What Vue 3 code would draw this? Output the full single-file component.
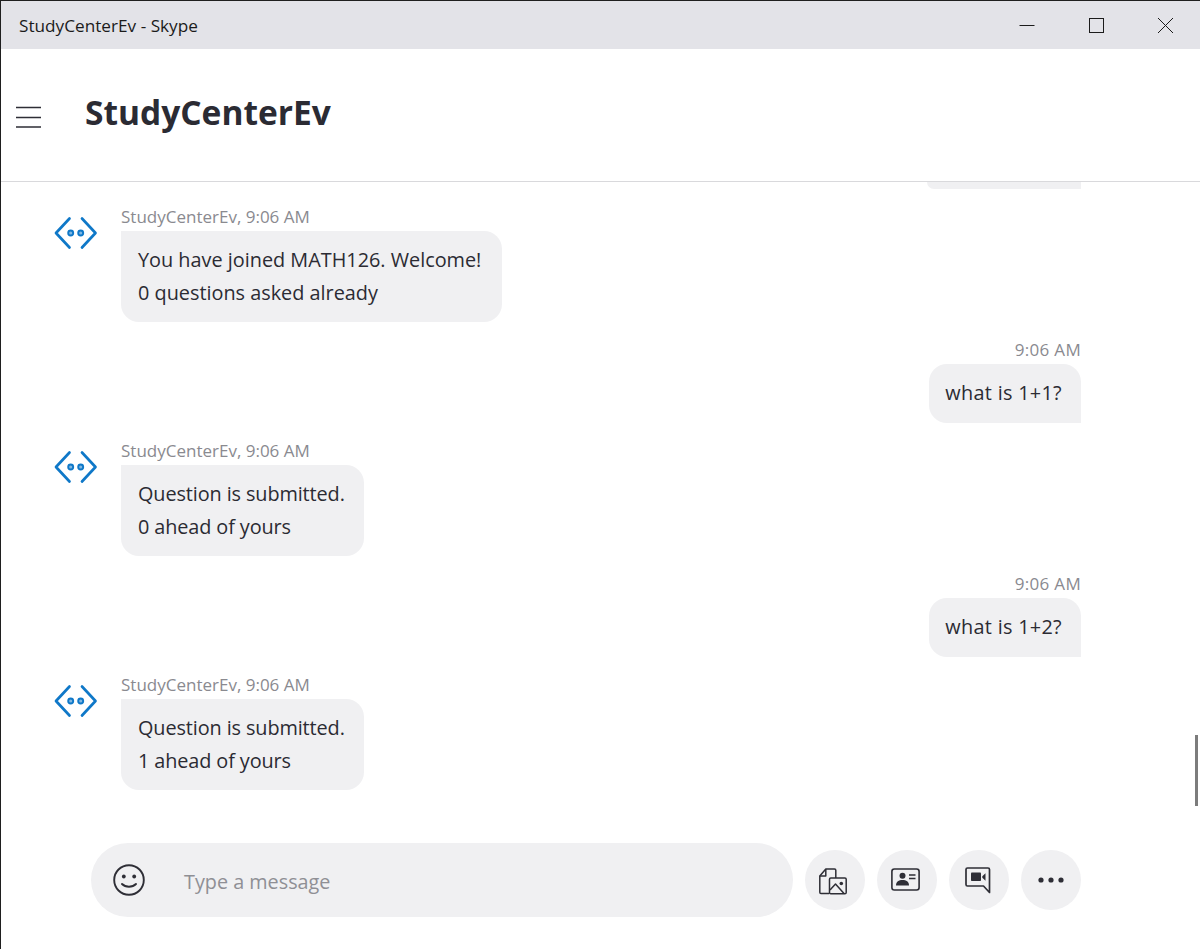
<template>
  <div class="window">
    <div class="titlebar">
      <span class="win-title">StudyCenterEv - Skype</span>
      <div class="win-buttons">
        <svg width="16" height="16" viewBox="0 0 16 16"><path d="M0.5 8.5h15" stroke="#1b1b1b" fill="none" /></svg>
        <svg width="16" height="16" viewBox="0 0 16 16"><rect x="1.5" y="1.5" width="14" height="14" stroke="#1b1b1b" fill="none" /></svg>
        <svg width="16" height="16" viewBox="0 0 16 16"><path d="M1 1l15 15M16 1L1 16" stroke="#1b1b1b" fill="none" /></svg>
      </div>
    </div>

    <header class="header">
      <svg class="burger" width="26" height="22" viewBox="0 0 26 22">
        <path d="M0 1.500h25M0 11.500h25M0 21h25" stroke="#2e2e36" stroke-width="1.600" fill="none" />
      </svg>
      <h1 class="chat-name">StudyCenterEv</h1>
    </header>

    <main class="messages">
      <div class="stub"></div>
      <template v-for="(m, i) in messages" :key="i">
        <div v-if="m.mine" class="row mine">
          <div class="meta">{{ m.time }}</div>
          <div class="bubble single">{{ m.lines[0] }}</div>
        </div>
        <div v-else class="row bot">
          <svg class="avatar" width="44" height="34" viewBox="0 0 44 34">
            <path d="M15.500 2.500L2 17l13.500 14.500M28 2.500L41.500 17 28 31.500" stroke="#0f78c8" stroke-width="2.700" stroke-linecap="round" stroke-linejoin="round" fill="none" />
            <circle cx="16.700" cy="17" r="2.500" fill="#7fb6e0" stroke="#0f78c8" stroke-width="1.900" />
            <circle cx="26.700" cy="17" r="2.500" fill="#7fb6e0" stroke="#0f78c8" stroke-width="1.900" />
          </svg>
          <div class="body">
            <div class="meta">StudyCenterEv, {{ m.time }}</div>
            <div class="bubble" :class="m.kind">
              <div v-for="line in m.lines" :key="line">{{ line }}</div>
            </div>
          </div>
        </div>
      </template>
    </main>

    <div class="scroll-thumb"></div>

    <footer class="composer">
      <div class="input">
        <svg class="smile" width="32" height="32" viewBox="0 0 32 32">
          <circle cx="16" cy="16" r="14.800" fill="none" stroke="#2e2e36" stroke-width="1.900" />
          <circle cx="10.800" cy="12.500" r="1.900" fill="#2e2e36" />
          <circle cx="21.200" cy="12.500" r="1.900" fill="#2e2e36" />
          <path d="M9 20c3.500 3.600 10.500 3.600 14 0" fill="none" stroke="#2e2e36" stroke-width="1.900" stroke-linecap="round" />
        </svg>
        <span class="placeholder">Type a message</span>
      </div>
      <button class="round">
        <svg class="icon-media" width="28" height="27" viewBox="0 0 28 27" fill="none" stroke="#2e2e36" stroke-width="1.500" stroke-linejoin="round">
          <path d="M10 25.500H2A1.300 1.300 0 0 1 .8 24.200V8l6-7h8.700a1.300 1.300 0 0 1 1.300 1.300V10" />
          <path d="M6.800 1v7H.8" />
          <rect x="10.500" y="10" width="16.700" height="15.700" rx="1.300" fill="#f0f0f2" />
          <path d="M11 22l5.500-6 8.500 9.500" />
          <circle cx="22.300" cy="15.500" r="1.800" fill="#2e2e36" stroke="none" />
        </svg>
      </button>
      <button class="round">
        <svg class="icon-card" width="29" height="23" viewBox="0 0 29 23" fill="none">
          <rect x=".9" y="1" width="27.200" height="21" rx="2.500" stroke="#2e2e36" stroke-width="1.600" />
          <circle cx="11.500" cy="7.800" r="3" fill="#2e2e36" />
          <path d="M5 17.500c0-4 2.800-5.500 6.500-5.500s6.500 1.500 6.500 5.500z" fill="#2e2e36" />
          <path d="M18 7h6.500M18 10.500h6.500" stroke="#2e2e36" stroke-width="1.500" />
        </svg>
      </button>
      <button class="round">
        <svg class="icon-video" width="26" height="27" viewBox="0 0 26 27" fill="none">
          <path d="M2.500 1h20.500A1.500 1.500 0 0 1 24.500 2.500V25.500l-6-6.500H2.500A1.500 1.500 0 0 1 1 17.500V2.500A1.500 1.500 0 0 1 2.500 1z" stroke="#2e2e36" stroke-width="1.700" stroke-linejoin="round" />
          <rect x="6" y="5.500" width="10" height="8.500" rx=".8" fill="#2e2e36" />
          <path d="M17.300 9.300l3.200-3v7.400l-3.200-3z" fill="#2e2e36" />
        </svg>
      </button>
      <button class="round">
        <svg width="26" height="6" viewBox="0 0 26 6" fill="#2e2e36">
          <circle cx="3" cy="3" r="2.600" />
          <circle cx="13" cy="3" r="2.600" />
          <circle cx="23" cy="3" r="2.600" />
        </svg>
      </button>
    </footer>
  </div>
</template>

<script setup>
const messages = [
  { kind: 'welcome', time: '9:06 AM', lines: ['You have joined MATH126. Welcome!', '0 questions asked already'] },
  { mine: true, time: '9:06 AM', lines: ['what is 1+1?'] },
  { kind: 'queued', time: '9:06 AM', lines: ['Question is submitted.', '0 ahead of yours'] },
  { mine: true, time: '9:06 AM', lines: ['what is 1+2?'] },
  { kind: 'queued', time: '9:06 AM', lines: ['Question is submitted.', '1 ahead of yours'] }
]
</script>

<style>
html, body {
  margin: 0;
  background: #fff;
}
</style>

<style scoped>
.window {
  position: relative;
  box-sizing: border-box;
  height: 949px;
  border-top: 1px solid #1f1f1f;
  border-left: 1px solid #1f1f1f;
  display: flex;
  flex-direction: column;
  overflow: hidden;
  background: #fff;
  color: #2b2b33;
  font-family: "Open Sans", "Noto Sans", sans-serif;
}
.titlebar {
  height: 48px;
  flex: none;
  background: #e3e3e8;
  display: flex;
  align-items: center;
  justify-content: space-between;
  padding-left: 18px;
}
.win-title {
  font-size: 17.2px;
  color: #1b1b1b;
}
.win-buttons {
  display: flex;
  gap: 53px;
  padding-right: 27px;
}
.header {
  height: 133px;
  flex: none;
  box-sizing: border-box;
  border-bottom: 1px solid #d9d9dc;
  display: flex;
  align-items: center;
  padding-left: 15px;
}
.burger {
  margin-top: 3px;
}
.chat-name {
  margin: 0 0 7px 43px;
  font-size: 33.5px;
  font-weight: 700;
  color: #2b2b33;
}
.messages {
  flex: 1;
  min-height: 0;
  padding: 0 119px 0 53px;
}
.stub {
  width: 154px;
  height: 7px;
  margin: 0 0 18px auto;
  background: #f0f0f2;
  border-radius: 0 0 0 14px;
}
.row.bot {
  display: flex;
  margin-bottom: 17px;
}
.row.mine {
  display: flex;
  flex-direction: column;
  align-items: flex-end;
  margin-bottom: 18px;
}
.avatar {
  margin: 9px 23px 0 0;
  flex: none;
}
.meta {
  font-size: 17px;
  line-height: 20px;
  color: #8a8a90;
  margin-bottom: 4px;
}
.row.mine .meta {
  line-height: 22px;
  margin-bottom: 3px;
  letter-spacing: 0.3px;
}
.bubble {
  background: #f0f0f2;
  border-radius: 0 18px 18px 18px;
  padding: 12px 19px 13px 17px;
  font-size: 19.85px;
  line-height: 33px;
  width: fit-content;
}
.bubble.welcome {
  padding-right: 21px;
}
.bubble.queued {
  letter-spacing: -0.1px;
}
.bubble.single {
  padding: 12px 19px 14px 16px;
  border-radius: 18px 18px 0 18px;
  letter-spacing: 0.3px;
}
.scroll-thumb {
  position: absolute;
  left: 1194px;
  top: 734px;
  width: 3px;
  height: 71px;
  background: #7c7c7c;
}
.composer {
  flex: none;
  height: 106px;
  box-sizing: border-box;
  padding: 0 119px 0 90px;
  display: flex;
  gap: 12px;
}
.input {
  flex: 1;
  height: 74px;
  border-radius: 37px;
  background: #f0f0f2;
  display: flex;
  align-items: center;
  padding-left: 22px;
}
.placeholder {
  margin-left: 39px;
  font-size: 19.8px;
  color: #8f8f95;
  margin-top: 3px;
}
.round {
  width: 60px;
  height: 60px;
  margin-top: 7px;
  border: 0;
  padding: 0;
  border-radius: 50%;
  background: #f0f0f2;
  display: flex;
  align-items: center;
  justify-content: center;
}
.icon-media {
  margin: 2px 4px 0 0;
}
.icon-card {
  margin: -2px 3px 0 0;
}
.icon-video {
  margin: 0 2px 0 0;
}
</style>
